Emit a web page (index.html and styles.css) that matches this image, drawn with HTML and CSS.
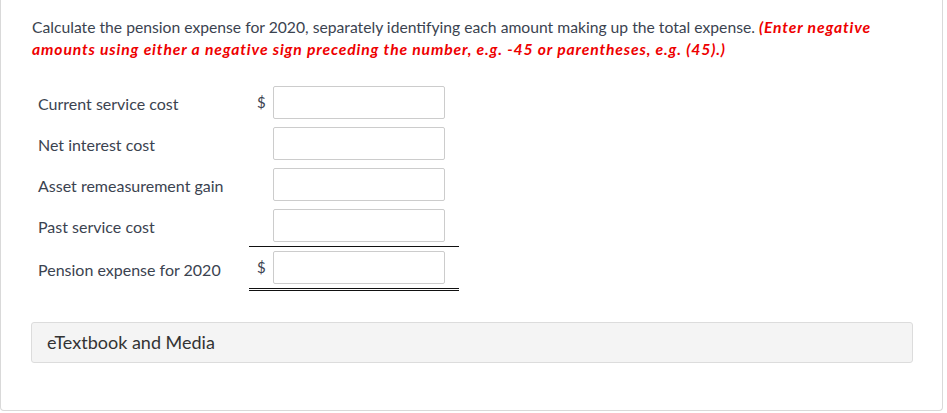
FILE: index.html
```html
<!DOCTYPE html>
<html>
<head>
<meta charset="utf-8">
<link rel="stylesheet" href="styles.css">
</head>
<body>
<div class="card">
  <p class="question">Calculate the pension expense for 2020, separately identifying each amount making up the total expense. <em class="note">(Enter negative amounts using either a negative sign preceding the number, e.g. -45 or parentheses, e.g. (45).)</em></p>
  <div class="table">
    <div class="row">
      <span class="label">Current service cost</span>
      <div class="entry">
        <span class="cur">$</span>
        <input class="box" type="text">
      </div>
    </div>
    <div class="row">
      <span class="label">Net interest cost</span>
      <div class="entry">
        <span class="cur"></span>
        <input class="box" type="text">
      </div>
    </div>
    <div class="row">
      <span class="label">Asset remeasurement gain</span>
      <div class="entry">
        <span class="cur"></span>
        <input class="box" type="text">
      </div>
    </div>
    <div class="row">
      <span class="label">Past service cost</span>
      <div class="entry">
        <span class="cur"></span>
        <input class="box" type="text">
      </div>
    </div>
    <div class="row total">
      <span class="label">Pension expense for 2020</span>
      <div class="entry sum">
        <span class="cur">$</span>
        <input class="box" type="text">
      </div>
    </div>
  </div>
  <div class="media">eTextbook and Media</div>
</div>
</body>
</html>
```

FILE: styles.css
```css
html, body {
  margin: 0;
  padding: 0;
  background: #fff;
}
body {
  font-family: Lato, "Liberation Sans", sans-serif;
  color: #3b4350;
}
.card {
  width: 941px;
  height: 410px;
  border: 1px solid #d9d9d9;
  border-top: none;
  border-radius: 0 0 4px 4px;
  box-sizing: content-box;
}
.question {
  margin: 0;
  padding: 16px 30px 0 31px;
  font-size: 15.7px;
  line-height: 22px;
}
.note {
  color: #ee0000;
  font-weight: bold;
  font-style: italic;
  letter-spacing: 0.85px;
}
.table {
  margin: 22px 0 0 37px;
  display: flex;
  flex-direction: column;
  width: 421px;
}
.row {
  display: flex;
  align-items: center;
  height: 41px;
}
.label {
  width: 211px;
  font-size: 16px;
  padding-top: 2px;
}
.entry {
  display: flex;
  align-items: center;
  width: 210px;
  height: 41px;
  box-sizing: border-box;
}
.cur {
  width: 24px;
  box-sizing: border-box;
  padding-left: 8px;
  font-size: 15px;
  padding-bottom: 2px;
}
.box {
  width: 172px;
  height: 33px;
  box-sizing: border-box;
  border: 1px solid #cccccc;
  border-radius: 2px;
  margin: 0;
  background: #fff;
}
.total {
  height: 45px;
}
.sum {
  height: 45px;
  border-top: 1px solid #111;
  border-bottom: 3px double #111;
}
.media {
  margin: 31px 0 0 30px;
  width: 882px;
  height: 41px;
  box-sizing: border-box;
  background: #f4f4f4;
  border: 1px solid #dcdcdc;
  border-radius: 3px;
  font-size: 18px;
  color: #333;
  padding: 8px 15px;
  line-height: 23px;
}
```
